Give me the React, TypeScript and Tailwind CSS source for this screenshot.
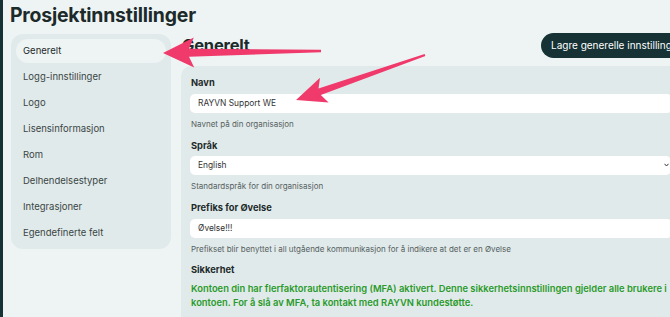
import React from "react";

type P = [number, number];

function arrowPoints(tip: P, tail: P, headLen: number, headHalf: number, shaftHead: number, shaftTail: number) {
  const dx = tail[0] - tip[0];
  const dy = tail[1] - tip[1];
  const len = Math.hypot(dx, dy);
  const u: P = [dx / len, dy / len];
  const n: P = [-u[1], u[0]];
  const at = (d: number, w: number): string =>
    `${(tip[0] + u[0] * d + n[0] * w).toFixed(1)},${(tip[1] + u[1] * d + n[1] * w).toFixed(1)}`;
  return [
    at(0, 0),
    at(headLen, headHalf),
    at(headLen - 5, shaftHead),
    at(len, shaftTail),
    at(len, -shaftTail),
    at(headLen - 5, -shaftHead),
    at(headLen, -headHalf),
  ].join(" ");
}

const sideItems = [
  "Generelt",
  "Logg-innstillinger",
  "Logo",
  "Lisensinformasjon",
  "Rom",
  "Delhendelsestyper",
  "Integrasjoner",
  "Egendefinerte felt",
];

export default function App() {
  return (
    <div
      className="relative w-[670px] h-[317px] overflow-hidden bg-[#eef4f4] border-l-[3px] border-[#163234] text-[#1d2a2a]"
      style={{ fontFamily: "Inter, 'Noto Sans', sans-serif" }}
    >
      <h1 className="pl-[7px] pt-[2px] h-[34px] text-[19.4px] leading-[26px] font-bold tracking-[-0.2px]">
        Prosjektinnstillinger
      </h1>
      <div className="flex items-start">
        <nav className="ml-[8px] w-[160px] shrink-0 rounded-[12px] bg-[#e1eaea] px-[5px] pt-[5px] pb-[4px] flex flex-col gap-[2px]">
          {sideItems.map((t, i) => (
            <div
              key={t}
              className={`h-[24px] flex items-center px-[7px] rounded-full text-[9.5px] ${
                i === 0 ? "bg-[#eef4f4] text-[#1d2a2a]" : "text-[#3a4646]"
              }`}
            >
              {t}
            </div>
          ))}
        </nav>
        <main className="ml-[10px] w-[520px] shrink-0">
          <div className="flex items-center justify-between h-[25px] -mt-[1px]">
            <h2 className="text-[16.5px] font-bold tracking-[-0.2px] ml-[1px]">Generelt</h2>
            <button className="h-[25px] w-[157px] mr-[3px] rounded-full bg-[#163234] text-white text-[10px] text-left pl-[10px] whitespace-nowrap">
              Lagre generelle innstillinger
            </button>
          </div>
          <section className="mt-[8px] rounded-tl-[10px] bg-[#e1eaea] pl-[9px] pt-[9px] h-[260px]">
            <div className="pl-[1px] text-[9.3px] leading-[16px] font-bold">Navn</div>
            <div className="mt-[3px] h-[19px] w-[482px] rounded-[5px] bg-white flex items-center px-[8px] text-[8.4px] text-[#333]">
              RAYVN Support WE
            </div>
            <div className="mt-[4px] pl-[1px] text-[8px] leading-[14px] text-[#556161]">Navnet på din organisasjon</div>

            <div className="mt-[7px] pl-[1px] text-[9.3px] leading-[16px] font-bold">Språk</div>
            <div className="relative mt-[2px] h-[19px] w-[481px] rounded-[5px] bg-white flex items-center px-[8px] text-[8.4px] text-[#333]">
              English
              <svg className="absolute right-[2px] top-[7px]" width="5" height="4" viewBox="0 0 5 4">
                <path d="M0.5 0.8 L2.5 3 L4.5 0.8" fill="none" stroke="#333" strokeWidth="1" />
              </svg>
            </div>
            <div className="mt-[4px] pl-[1px] text-[8px] leading-[14px] text-[#556161]">Standardspråk for din organisasjon</div>

            <div className="mt-[7px] pl-[1px] text-[9.3px] leading-[16px] font-bold">Prefiks for Øvelse</div>
            <div className="mt-[3px] h-[19px] w-[482px] rounded-[5px] bg-white flex items-center px-[8px] text-[8.4px] text-[#333]">
              Øvelse!!!
            </div>
            <div className="mt-[4px] pl-[1px] text-[8px] leading-[14px] text-[#556161]">
              Prefikset blir benyttet i all utgående kommunikasjon for å indikere at det er en Øvelse
            </div>

            <div className="mt-[6px] pl-[1px] text-[9.3px] leading-[16px] font-bold">Sikkerhet</div>
            <div className="mt-[4px] pl-[1px] text-[9.4px] leading-[14px] font-semibold text-[#2a9a2a] whitespace-nowrap">
              <div>Kontoen din har flerfaktorautentisering (MFA) aktivert. Denne sikkerhetsinnstillingen gjelder alle brukere i</div>
              <div>kontoen. For å slå av MFA, ta kontakt med RAYVN kundestøtte.</div>
            </div>
          </section>
        </main>
      </div>

      <svg className="absolute left-0 top-0 pointer-events-none" width="670" height="317" viewBox="0 0 670 317">
        <polygon points={arrowPoints([160, 53], [318, 51], 31, 15, 4, 1.3)} fill="#f03a6c" />
        <polygon points={arrowPoints([293, 100], [422, 55], 30, 13, 3.5, 1.2)} fill="#f03a6c" />
      </svg>
    </div>
  );
}
